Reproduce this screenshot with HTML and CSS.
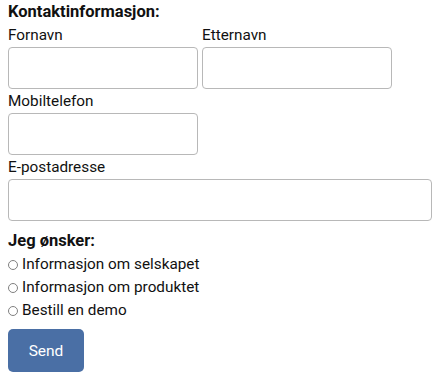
FILE: index.html
```html
<!DOCTYPE html>
<html lang="no">
<head>
<meta charset="utf-8">
<link rel="stylesheet" href="styles.css">
</head>
<body>
<form class="form">
  <div class="heading">Kontaktinformasjon:</div>
  <div class="row">
    <div class="field">
      <label class="label">Fornavn</label>
      <input class="input" type="text">
    </div>
    <div class="field">
      <label class="label">Etternavn</label>
      <input class="input" type="text">
    </div>
  </div>
  <div class="field">
    <label class="label">Mobiltelefon</label>
    <input class="input" type="text">
  </div>
  <div class="field field-wide">
    <label class="label">E-postadresse</label>
    <input class="input input-wide" type="text">
  </div>
  <div class="heading heading-wish">Jeg ønsker:</div>
  <div class="options">
    <label class="option"><span class="radio"></span>Informasjon om selskapet</label>
    <label class="option"><span class="radio"></span>Informasjon om produktet</label>
    <label class="option"><span class="radio"></span>Bestill en demo</label>
  </div>
  <button class="send" type="button">Send</button>
</form>
</body>
</html>
```
FILE: styles.css
```css
html, body {
  margin: 0;
  background: #fff;
}
body {
  padding: 0 8px;
  font-family: Roboto, "Noto Sans", sans-serif;
  font-size: 15.3px;
  color: #111;
}
.form {
  display: flex;
  flex-direction: column;
  align-items: flex-start;
}
.heading {
  font-weight: 700;
  font-size: 16.5px;
  line-height: 23px;
}
.heading-wish {
  margin-top: 8px;
}
.row {
  display: flex;
  gap: 4px;
}
.field {
  display: flex;
  flex-direction: column;
}
.field-wide {
  align-self: stretch;
}
.label {
  line-height: 24px;
}
.input {
  box-sizing: border-box;
  width: 190px;
  height: 42px;
  margin: 0;
  border: 1px solid #b8b8b8;
  border-radius: 4px;
  background: #fff;
}
.input-wide {
  width: 424px;
}
.options {
  display: flex;
  flex-direction: column;
  margin-top: 1px;
}
.option {
  display: flex;
  align-items: center;
  line-height: 23px;
}
.radio {
  box-sizing: border-box;
  width: 10px;
  height: 10px;
  border: 1px solid #808080;
  border-radius: 50%;
  margin: 1px 4px 0 0;
}
.send {
  margin-top: 7px;
  width: 76px;
  height: 43px;
  border: none;
  border-radius: 5px;
  background: #4a6fa5;
  color: #fff;
  font-family: Roboto, "Noto Sans", sans-serif;
  font-size: 15.5px;
}
```
